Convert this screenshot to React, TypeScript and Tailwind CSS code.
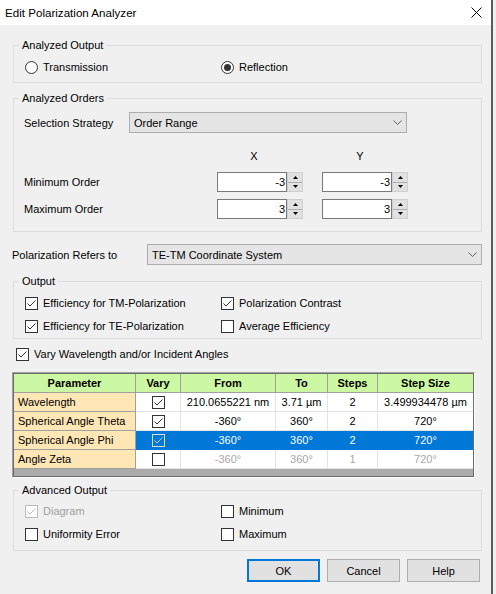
import React from 'react';

const CheckMark = ({ color }: { color: string }) => (
  <svg width="11" height="11" viewBox="0 0 11 11" className="block">
    <path d="M1.5 5.5 L4 8 L9.5 2.5" fill="none" stroke={color} strokeWidth="1" />
  </svg>
);

const Box = ({ checked, disabled, onBlue }: { checked?: boolean; disabled?: boolean; onBlue?: boolean }) => {
  let cls = 'border-[#333333] bg-white';
  let mark = '#333333';
  if (disabled) {
    cls = 'border-[#bcbcbc] bg-white';
    mark = '#bcbcbc';
  }
  if (onBlue) {
    cls = 'border-[#dcdcdc] bg-[#0078d7]';
    mark = '#d0d0d0';
  }
  return (
    <span className={`w-[13px] h-[13px] shrink-0 border flex items-center justify-center ${cls}`}>
      {checked && <CheckMark color={mark} />}
    </span>
  );
};

const CheckItem = ({ label, checked, disabled, className = '' }: { label: string; checked?: boolean; disabled?: boolean; className?: string }) => (
  <div className={`flex items-center gap-[5px] h-[16px] ${className}`}>
    <Box checked={checked} disabled={disabled} />
    <span className={disabled ? 'text-[#a0a0a0]' : ''}>{label}</span>
  </div>
);

const Radio = ({ label, selected, className = '' }: { label: string; selected?: boolean; className?: string }) => (
  <div className={`flex items-center gap-[5px] h-[16px] ${className}`}>
    <span className="w-[13px] h-[13px] rounded-full border border-[#333333] bg-white flex items-center justify-center">
      {selected && <span className="w-[7px] h-[7px] rounded-full bg-[#333333]" />}
    </span>
    <span>{label}</span>
  </div>
);

const Group = ({ title, className = '', inner = '', children }: { title: string; className?: string; inner?: string; children: React.ReactNode }) => (
  <fieldset className={`ml-[13px] w-[469px] border border-[#dcdcdc] ${className}`}>
    <legend className="ml-[5px] px-[3px] leading-[16px]">{title}</legend>
    <div className={inner}>{children}</div>
  </fieldset>
);

const Combo = ({ value, className }: { value: string; className: string }) => (
  <div className={`h-[21px] bg-[#e5e5e5] border border-[#adadad] flex items-center justify-between pl-[4px] pr-[4px] ${className}`}>
    <span>{value}</span>
    <svg width="9" height="5" viewBox="0 0 9 5" className="block">
      <path d="M0.5 0.5 L4.5 4.5 L8.5 0.5" fill="none" stroke="#606060" strokeWidth="1" />
    </svg>
  </div>
);

const Spin = ({ value }: { value: string }) => (
  <div className="flex h-[20px]">
    <div className="w-[70px] h-[20px] bg-white border border-[#7a7a7a] flex items-center justify-end pr-[1px]">{value}</div>
    <div className="w-[16px] h-[20px] border border-[#cfcfcf] flex flex-col bg-[#f0f0f0]">
      <div className="flex-1 bg-[#e1e1e1] border-b border-[#adadad] flex items-center justify-center">
        <svg width="5" height="3" viewBox="0 0 5 3" className="block"><path d="M0 3 L2.5 0 L5 3 Z" fill="#000" /></svg>
      </div>
      <div className="flex-1 bg-[#e1e1e1] flex items-center justify-center">
        <svg width="5" height="3" viewBox="0 0 5 3" className="block"><path d="M0 0 L2.5 3 L5 0 Z" fill="#000" /></svg>
      </div>
    </div>
  </div>
);

const rows = [
  { name: 'Wavelength', vary: true, from: '210.0655221 nm', to: '3.71 µm', steps: '2', size: '3.499934478 µm' },
  { name: 'Spherical Angle Theta', vary: true, from: '-360°', to: '360°', steps: '2', size: '720°' },
  { name: 'Spherical Angle Phi', vary: true, from: '-360°', to: '360°', steps: '2', size: '720°', selected: true },
  { name: 'Angle Zeta', vary: false, from: '-360°', to: '360°', steps: '1', size: '720°', dim: true },
];

const ParamTable = () => (
  <div className="ml-[12px] w-[463px] border border-[#a0a0a0] border-r-white border-b-white">
    <div className="h-[104px] border border-[#6d6d6d] bg-[#ababab]">
      <div className="flex h-[19px] bg-[#ccf7a3] font-bold border-b border-[#a0a0a0]">
        <div className="w-[122px] border-r border-[#a0a0a0] flex items-center justify-center">Parameter</div>
        <div className="w-[45px] border-r border-[#a0a0a0] flex items-center justify-center">Vary</div>
        <div className="w-[95px] border-r border-[#a0a0a0] flex items-center justify-center">From</div>
        <div className="w-[52px] border-r border-[#a0a0a0] flex items-center justify-center">To</div>
        <div className="w-[50px] border-r border-[#a0a0a0] flex items-center justify-center">Steps</div>
        <div className="w-[95px] flex items-center justify-center">Step Size</div>
      </div>
      {rows.map((r) => {
        const cell = r.selected
          ? 'bg-[#0078d7] text-white border-[#0078d7]'
          : r.dim
          ? 'bg-white text-[#a8a8a8] border-[#e3e3e3]'
          : 'bg-white border-[#e3e3e3]';
        return (
          <div key={r.name} className="flex h-[19px]">
            <div className="w-[122px] bg-[#ffe6b5] border-r border-b border-[#a0a0a0] flex items-center pl-[4px]">{r.name}</div>
            <div className={`w-[45px] border-r border-b flex items-center justify-center ${cell}`}>
              <Box checked={r.vary} onBlue={r.selected} />
            </div>
            <div className={`w-[95px] border-r border-b flex items-center justify-center ${cell}`}>{r.from}</div>
            <div className={`w-[52px] border-r border-b flex items-center justify-center ${cell}`}>{r.to}</div>
            <div className={`w-[50px] border-r border-b flex items-center justify-center ${cell}`}>{r.steps}</div>
            <div className={`w-[95px] border-b flex items-center justify-center ${cell}`}>{r.size}</div>
          </div>
        );
      })}
    </div>
  </div>
);

export default function App() {
  return (
    <div className="w-[496px] h-[594px] bg-[#f0f0f0] flex overflow-hidden font-['Liberation_Sans',Arial,sans-serif] text-[11px] leading-[16px] text-black">
      <div className="w-[491px] flex flex-col">
        <div className="h-[25px] bg-white flex items-center justify-between pl-[5px] pr-[9px]">
          <span className="text-[11.6px]">Edit Polarization Analyzer</span>
          <svg width="11" height="11" viewBox="0 0 11 11" className="block">
            <path d="M0.5 0.5 L10.5 10.5 M10.5 0.5 L0.5 10.5" stroke="#000" strokeWidth="1" />
          </svg>
        </div>

        <Group title="Analyzed Output" className="mt-[12px] pt-[6px] pb-[7px]" inner="pl-[11px]">
          <div className="flex">
            <Radio label="Transmission" className="w-[196px]" />
            <Radio label="Reflection" selected />
          </div>
        </Group>

        <Group title="Analyzed Orders" className="mt-[7px] pt-[6px] pb-[12px]" inner="pl-[10px]">
          <div className="flex items-center">
            <span className="w-[105px]">Selection Strategy</span>
            <Combo value="Order Range" className="w-[278px]" />
          </div>
          <div className="flex mt-[15px] h-[16px]">
            <span className="w-[193px]" />
            <span className="w-[74px] text-center">X</span>
            <span className="w-[31px]" />
            <span className="w-[76px] text-center">Y</span>
          </div>
          <div className="flex items-center mt-[8px]">
            <span className="w-[193px]">Minimum Order</span>
            <div className="w-[105px]"><Spin value="-3" /></div>
            <Spin value="-3" />
          </div>
          <div className="flex items-center mt-[7px]">
            <span className="w-[193px]">Maximum Order</span>
            <div className="w-[105px]"><Spin value="3" /></div>
            <Spin value="3" />
          </div>
        </Group>

        <div className="flex items-center mt-[12px] ml-[12px]">
          <span className="w-[135px]">Polarization Refers to</span>
          <Combo value="TE-TM Coordinate System" className="w-[335px]" />
        </div>

        <Group title="Output" className="mt-[8px] pt-[6px] pb-[4px]" inner="pl-[11px]">
          <div className="flex">
            <CheckItem label="Efficiency for TM-Polarization" checked className="w-[196px]" />
            <CheckItem label="Polarization Contrast" checked />
          </div>
          <div className="flex mt-[7px]">
            <CheckItem label="Efficiency for TE-Polarization" checked className="w-[196px]" />
            <CheckItem label="Average Efficiency" />
          </div>
        </Group>

        <CheckItem label="Vary Wavelength and/or Incident Angles" checked className="mt-[7px] ml-[16px]" />

        <div className="mt-[10px]">
          <ParamTable />
        </div>

        <Group title="Advanced Output" className="mt-[4px] pt-[5px] pb-[8px]" inner="pl-[11px]">
          <div className="flex">
            <CheckItem label="Diagram" checked disabled className="w-[196px]" />
            <CheckItem label="Minimum" />
          </div>
          <div className="flex mt-[7px]">
            <CheckItem label="Uniformity Error" className="w-[196px]" />
            <CheckItem label="Maximum" />
          </div>
        </Group>

        <div className="flex justify-end gap-[7px] mt-[8px] pr-[11px]">
          <button className="w-[73px] h-[23px] bg-[#e1e1e1] border-2 border-[#0078d7]">OK</button>
          <button className="w-[73px] h-[23px] bg-[#e1e1e1] border border-[#adadad]">Cancel</button>
          <button className="w-[73px] h-[23px] bg-[#e1e1e1] border border-[#adadad]">Help</button>
        </div>
      </div>
      <div className="w-[2px] bg-[#5c5c5c]" />
    </div>
  );
}
